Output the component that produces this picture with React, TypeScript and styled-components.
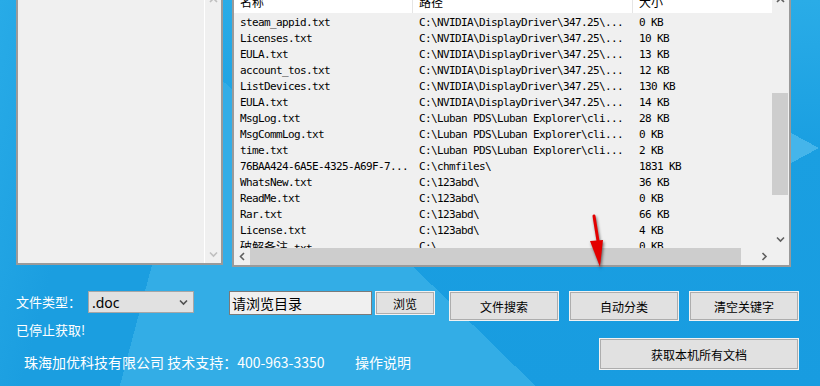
import React from "react";
import styled, { createGlobalStyle } from "styled-components";

const GlobalStyle = createGlobalStyle`
  html, body {
    margin: 0;
    padding: 0;
  }
  body {
    font-family: "Noto Sans CJK SC", "Liberation Sans", sans-serif;
    background: #1a9de0;
  }
`;

const files = [
  { name: "steam_appid.txt", path: "C:\\NVIDIA\\DisplayDriver\\347.25\\...", size: "0 KB" },
  { name: "Licenses.txt", path: "C:\\NVIDIA\\DisplayDriver\\347.25\\...", size: "10 KB" },
  { name: "EULA.txt", path: "C:\\NVIDIA\\DisplayDriver\\347.25\\...", size: "13 KB" },
  { name: "account_tos.txt", path: "C:\\NVIDIA\\DisplayDriver\\347.25\\...", size: "12 KB" },
  { name: "ListDevices.txt", path: "C:\\NVIDIA\\DisplayDriver\\347.25\\...", size: "130 KB" },
  { name: "EULA.txt", path: "C:\\NVIDIA\\DisplayDriver\\347.25\\...", size: "14 KB" },
  { name: "MsgLog.txt", path: "C:\\Luban PDS\\Luban Explorer\\cli...", size: "28 KB" },
  { name: "MsgCommLog.txt", path: "C:\\Luban PDS\\Luban Explorer\\cli...", size: "0 KB" },
  { name: "time.txt", path: "C:\\Luban PDS\\Luban Explorer\\cli...", size: "2 KB" },
  { name: "76BAA424-6A5E-4325-A69F-7...", path: "C:\\chmfiles\\", size: "1831 KB" },
  { name: "WhatsNew.txt", path: "C:\\123abd\\", size: "36 KB" },
  { name: "ReadMe.txt", path: "C:\\123abd\\", size: "0 KB" },
  { name: "Rar.txt", path: "C:\\123abd\\", size: "66 KB" },
  { name: "License.txt", path: "C:\\123abd\\", size: "4 KB" },
  { name: "破解备注.txt", path: "C:\\", size: "0 KB" },
];

const Page = styled.div`
  position: relative;
  width: 820px;
  height: 386px;
  overflow: hidden;
  display: flex;
  flex-direction: column;
  background:
    linear-gradient(to top right, #45b5ea 50%, transparent 50%) 791px 133px / 28px 15px no-repeat,
    linear-gradient(to bottom right, #45b5ea 50%, transparent 50%) 791px 148px / 28px 15px no-repeat,
    linear-gradient(104.9deg, #28abe7 0px, #1b9ee0 120px, #1b9ee0 215px, transparent 215px),
    linear-gradient(44.3deg, #33ade6 374px, transparent 374px),
    linear-gradient(180deg, #2aace7 0%, #1a9fe1 38%, #189ce0 100%);
`;

/* ---------- panels ---------- */

const TopRow = styled.div`
  display: flex;
  flex-shrink: 0;
  margin-top: -10px;
  padding-left: 16px;
  height: 277px;
`;

const FolderPanel = styled.div`
  width: 207px;
  height: 275px;
  box-sizing: border-box;
  border: 2px solid #9a9a9a;
  background: #f0f0f0;
  display: flex;
`;

const FolderArea = styled.div`
  flex: 1;
`;

const ListPanel = styled.div`
  margin-left: 9px;
  width: 559px;
  height: 277px;
  box-sizing: border-box;
  border: 2px solid #9a9a9a;
  background: #f0f0f0;
  display: grid;
  grid-template-columns: 1fr 17px;
  grid-template-rows: 1fr 17px;
`;

const ListBody = styled.div`
  overflow: hidden;
  min-width: 0;
`;

const HeaderRow = styled.div`
  display: grid;
  grid-template-columns: 179px 220px 1fr;
  height: 21px;
  background: #fff;
`;

const HeaderCell = styled.div`
  padding-left: 6px;
  font-size: 12px;
  line-height: 19px;
  color: #000;
  border-right: 1px solid #e5e5e5;
  &:last-child {
    border-right: none;
  }
`;

const Row = styled.div`
  display: grid;
  grid-template-columns: 179px 220px 1fr;
  height: 16px;
`;

const Cell = styled.div`
  padding-left: 6px;
  font-family: "DejaVu Sans Mono", "Noto Sans CJK SC", monospace;
  font-size: 11px;
  letter-spacing: -0.62px;
  line-height: 19px;
  height: 16px;
  color: #000;
  white-space: nowrap;
  overflow: hidden;
`;

const Cjk = styled.span`
  font-family: "Noto Sans CJK SC", sans-serif;
  font-size: 12px;
  letter-spacing: 0;
`;

/* ---------- scrollbars ---------- */

const VScroll = styled.div<{ $divider?: boolean }>`
  width: 16px;
  display: flex;
  flex-direction: column;
  background: #f0f0f0;
  border-left: ${(p) => (p.$divider ? "1px solid #fff" : "none")};
`;

const HScroll = styled.div`
  display: flex;
  background: #f0f0f0;
`;

const ArrowCell = styled.div<{ $len?: number }>`
  flex: 0 0 ${(p) => p.$len ?? 17}px;
  display: flex;
  align-items: center;
  justify-content: center;
`;

const Track = styled.div<{ $vertical?: boolean }>`
  flex: 1;
  display: flex;
  flex-direction: ${(p) => (p.$vertical ? "column" : "row")};
`;

const Thumb = styled.div`
  background: #cdcdcd;
`;

const Corner = styled.div`
  background: #f0f0f0;
`;

const Chevron = ({ dir, color }: { dir: "up" | "down" | "left" | "right"; color: string }) => {
  const vertical = dir === "up" || dir === "down";
  const d = {
    up: "M1 5 L4.5 1.5 L8 5",
    down: "M1 1.5 L4.5 5 L8 1.5",
    left: "M5 1 L1.5 4.5 L5 8",
    right: "M1.5 1 L5 4.5 L1.5 8",
  }[dir];
  return (
    <svg width={vertical ? 9 : 7} height={vertical ? 7 : 9} viewBox={vertical ? "0 0 9 7" : "0 0 7 9"}>
      <path d={d} fill="none" stroke={color} strokeWidth="1.6" />
    </svg>
  );
};

/* ---------- controls ---------- */

const Controls = styled.div`
  display: flex;
  align-items: flex-start;
  margin-top: 24px;
  padding-left: 16px;
`;

const Label = styled.div`
  width: 72px;
  font-size: 13px;
  line-height: 22px;
  color: #fff;
`;

const Select = styled.div`
  width: 106px;
  height: 22px;
  box-sizing: border-box;
  border: 1px solid #a6a6a6;
  background: #e1e1e1;
  display: flex;
  align-items: center;
  justify-content: space-between;
  padding: 0 5px 0 3px;
  font-family: "Noto Sans", "Liberation Sans", sans-serif;
  font-size: 14px;
  color: #000;
`;

const PathBox = styled.div`
  margin-left: 35px;
  width: 143px;
  height: 24px;
  box-sizing: border-box;
  border: 1px solid #7a7a7a;
  background: #f0f0f0;
  padding-left: 2px;
  font-size: 14px;
  line-height: 22px;
  color: #000;
`;

const Button = styled.div<{ $w: number; $h: number; $gap?: number }>`
  margin-left: ${(p) => p.$gap ?? 0}px;
  width: ${(p) => p.$w}px;
  height: ${(p) => p.$h}px;
  box-sizing: border-box;
  border: 1px solid #f2f2f2;
  box-shadow: inset 0 0 0 1px #adadad;
  background: #e1e1e1;
  display: flex;
  align-items: center;
  justify-content: center;
  font-size: 12px;
  color: #000;
  flex-shrink: 0;
`;

const Lower = styled.div`
  display: flex;
  justify-content: space-between;
`;

const InfoColumn = styled.div`
  padding-left: 16px;
`;

const Status = styled.div`
  font-size: 13px;
  line-height: 18px;
  color: #fff;
`;

const Footer = styled.div`
  display: flex;
  margin-top: 13px;
  padding-left: 8px;
  font-size: 14px;
  line-height: 20px;
  color: #fff;
  white-space: nowrap;
`;

const Company = styled.span`
  width: 331px;
`;

const BigButtonSlot = styled.div`
  margin-top: 17px;
  margin-right: 21px;
`;

const Pointer = styled.svg`
  position: absolute;
  left: 585px;
  top: 208px;
  filter: drop-shadow(1px 2px 1.5px rgba(0, 0, 0, 0.55));
`;

export default function App() {
  return (
    <Page>
      <GlobalStyle />
      <TopRow>
        <FolderPanel>
          <FolderArea />
          <VScroll $divider>
            <ArrowCell>
              <Chevron dir="up" color="#bfbfbf" />
            </ArrowCell>
            <Track $vertical />
            <ArrowCell>
              <Chevron dir="down" color="#bfbfbf" />
            </ArrowCell>
          </VScroll>
        </FolderPanel>

        <ListPanel>
          <ListBody>
            <HeaderRow>
              <HeaderCell>名称</HeaderCell>
              <HeaderCell>路径</HeaderCell>
              <HeaderCell>大小</HeaderCell>
            </HeaderRow>
            {files.map((f, i) => (
              <Row key={i}>
                <Cell>
                  {f.name.startsWith("破解") ? (
                    <>
                      <Cjk>破解备注</Cjk>.txt
                    </>
                  ) : (
                    f.name
                  )}
                </Cell>
                <Cell>{f.path}</Cell>
                <Cell>{f.size}</Cell>
              </Row>
            ))}
          </ListBody>

          <VScroll>
            <ArrowCell>
              <Chevron dir="up" color="#606060" />
            </ArrowCell>
            <Track $vertical>
              <Thumb style={{ marginTop: 84, height: 102 }} />
            </Track>
            <ArrowCell>
              <Chevron dir="down" color="#606060" />
            </ArrowCell>
          </VScroll>

          <HScroll>
            <ArrowCell $len={16}>
              <Chevron dir="left" color="#606060" />
            </ArrowCell>
            <Track>
              <Thumb style={{ width: 491 }} />
            </Track>
            <ArrowCell $len={16}>
              <Chevron dir="right" color="#606060" />
            </ArrowCell>
          </HScroll>
          <Corner />
        </ListPanel>
      </TopRow>

      <Controls>
        <Label>文件类型：</Label>
        <Select>
          <span>.doc</span>
          <Chevron dir="down" color="#505050" />
        </Select>
        <PathBox>请浏览目录</PathBox>
        <Button $w={60} $h={24} $gap={3}>浏览</Button>
        <Button $w={110} $h={30} $gap={14}>文件搜索</Button>
        <Button $w={110} $h={30} $gap={10}>自动分类</Button>
        <Button $w={110} $h={30} $gap={10}>清空关键字</Button>
      </Controls>

      <Lower>
        <InfoColumn>
          <Status>已停止获取!</Status>
          <Footer>
            <Company>珠海加优科技有限公司 技术支持：400-963-3350</Company>
            <span>操作说明</span>
          </Footer>
        </InfoColumn>
        <BigButtonSlot>
          <Button $w={200} $h={32}>获取本机所有文档</Button>
        </BigButtonSlot>
      </Lower>

      <Pointer width="26" height="64" viewBox="0 0 26 64">
        <line x1="9" y1="8" x2="13.5" y2="36" stroke="#e30000" strokeWidth="3" strokeLinecap="round" />
        <polygon points="5,33 18,32 15,59" fill="#e30000" />
      </Pointer>
    </Page>
  );
}
